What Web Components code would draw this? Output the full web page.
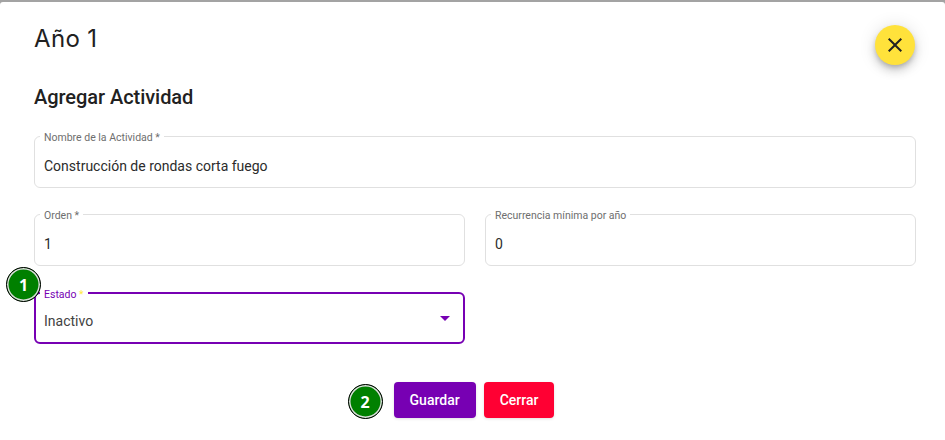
<!DOCTYPE html>
<html>
<head>
<meta charset="utf-8">
<style>
  html, body { margin: 0; padding: 0; }
  body { font-family: Roboto, sans-serif; overflow: hidden; background: #a3a3a3; }
</style>
</head>
<body>
<activity-dialog>
  <span slot="title">Año 1</span>
  <span slot="subtitle">Agregar Actividad</span>
  <outlined-field label="Nombre de la Actividad *" value="Construcción de rondas corta fuego" wide></outlined-field>
  <outlined-field label="Orden *" value="1"></outlined-field>
  <outlined-field label="Recurrencia mínima por año" value="0"></outlined-field>
  <outlined-field label="Estado" value="Inactivo" required-mark focused select>
    <step-badge num="1" class="over"></step-badge>
  </outlined-field>
  <action-button slot="actions" color="#7700b3">Guardar
    <step-badge num="2" class="beside" slot="badge"></step-badge>
  </action-button>
  <action-button slot="actions" color="#ff0033">Cerrar</action-button>
</activity-dialog>

<script>
class StepBadge extends HTMLElement {
  connectedCallback() {
    if (this.shadowRoot) return;
    this.attachShadow({ mode: "open" }).innerHTML = `<style>
      :host {
        position: absolute;
        display: flex;
        align-items: center;
        justify-content: center;
        box-sizing: border-box;
        width: 35px;
        height: 35px;
        padding-top: 1px;
        border-radius: 50%;
        background: #008000;
        border: 1px solid #000;
        box-shadow: inset 0 0 0 1.5px #ddd;
        color: #fff;
        font: 700 16px "Open Sans", sans-serif;
      }
      :host(.over) { left: -28px; top: -25px; }
      :host(.beside) { left: -46px; top: 2px; }
    </style>${this.getAttribute("num")}`;
  }
}
customElements.define("step-badge", StepBadge);

class OutlinedField extends HTMLElement {
  connectedCallback() {
    if (this.shadowRoot) return;
    const mark = this.hasAttribute("required-mark") ? ' <span class="mark">*</span>' : "";
    const arrow = this.hasAttribute("select") ? '<span class="arrow"></span>' : "";
    this.attachShadow({ mode: "open" }).innerHTML = `<style>
      :host {
        display: block;
        position: relative;
        height: 52px;
        color: #2b2b2b;
      }
      :host([wide]) { grid-column: 1 / -1; }
      fieldset {
        box-sizing: border-box;
        margin: -8px 0 0;
        padding: 0 0 0 5px;
        height: 60px;
        border: 1px solid #e0e0e0;
        border-radius: 6px;
      }
      legend {
        padding: 4px 4px 0;
        font-size: 10.5px;
        line-height: 12px;
        color: #6e6e6e;
      }
      .mark { color: #ffeb3b; }
      .value {
        position: absolute;
        left: 10px;
        top: 21px;
        font-size: 14px;
        line-height: 18px;
      }
      :host([focused]) fieldset {
        border: 2px solid #7700b3;
        padding-left: 4px;
        margin-top: -7px;
        height: 59px;
      }
      :host([focused]) legend { color: #7700b3; }
      :host([focused]) .value { color: #424242; top: 20px; }
      .arrow {
        position: absolute;
        right: 15px;
        top: 24px;
        border-left: 5px solid transparent;
        border-right: 5px solid transparent;
        border-top: 5px solid #7700b3;
      }
    </style>
    <fieldset><legend>${this.getAttribute("label")}${mark}</legend></fieldset>
    <div class="value">${this.getAttribute("value")}</div>
    ${arrow}
    <slot></slot>`;
  }
}
customElements.define("outlined-field", OutlinedField);

class ActionButton extends HTMLElement {
  connectedCallback() {
    if (this.shadowRoot) return;
    this.attachShadow({ mode: "open" }).innerHTML = `<style>
      :host {
        display: flex;
        position: relative;
        align-items: center;
        height: 36px;
        padding: 0 16px;
        border-radius: 4px;
        color: #fff;
        font-size: 14px;
        font-weight: 500;
        background: ${this.getAttribute("color")};
        box-shadow: 0 1px 3px rgba(0,0,0,.12);
      }
    </style><slot></slot><slot name="badge"></slot>`;
  }
}
customElements.define("action-button", ActionButton);

class CloseFab extends HTMLElement {
  connectedCallback() {
    if (this.shadowRoot) return;
    this.attachShadow({ mode: "open" }).innerHTML = `<style>
      :host {
        position: absolute;
        right: 30px;
        top: 23px;
        width: 40px;
        height: 40px;
        display: flex;
        align-items: center;
        justify-content: center;
        border-radius: 50%;
        background: #ffe23b;
        box-shadow: 0 3px 5px -1px rgba(0,0,0,.2), 0 6px 10px 0 rgba(0,0,0,.14), 0 1px 18px 0 rgba(0,0,0,.12);
      }
    </style>
    <svg width="24" height="24" viewBox="0 0 24 24"><path fill="#212121" d="M19 6.41 17.59 5 12 10.59 6.41 5 5 6.41 10.59 12 5 17.59 6.41 19 12 13.41 17.59 19 19 17.59 13.41 12z"/></svg>`;
  }
}
customElements.define("close-fab", CloseFab);

class ActivityDialog extends HTMLElement {
  connectedCallback() {
    if (this.shadowRoot) return;
    this.attachShadow({ mode: "open" }).innerHTML = `<style>
      :host {
        display: block;
        position: relative;
        box-sizing: border-box;
        height: 438px;
        margin-top: 2px;
        padding: 0 29px 0 34px;
        background: #fff;
        border-radius: 3px 3px 0 0;
        color: #212121;
      }
      h1 {
        margin: 0;
        padding-top: 21px;
        font: 400 24px/32px Inter, sans-serif;
        letter-spacing: .35px;
        color: #212121;
      }
      h2 {
        margin: 30px 0 0;
        font: 500 20px/24px Roboto, sans-serif;
        letter-spacing: -.05px;
      }
      .grid {
        display: grid;
        grid-template-columns: 1fr 1fr;
        gap: 26px 20px;
        margin-top: 27px;
      }
      .actions {
        display: flex;
        justify-content: center;
        gap: 8px;
        margin-top: 38px;
        padding-right: 2px;
      }
    </style>
    <h1><slot name="title"></slot></h1>
    <close-fab></close-fab>
    <h2><slot name="subtitle"></slot></h2>
    <div class="grid"><slot></slot></div>
    <div class="actions"><slot name="actions"></slot></div>`;
  }
}
customElements.define("activity-dialog", ActivityDialog);
</script>
</body>
</html>
